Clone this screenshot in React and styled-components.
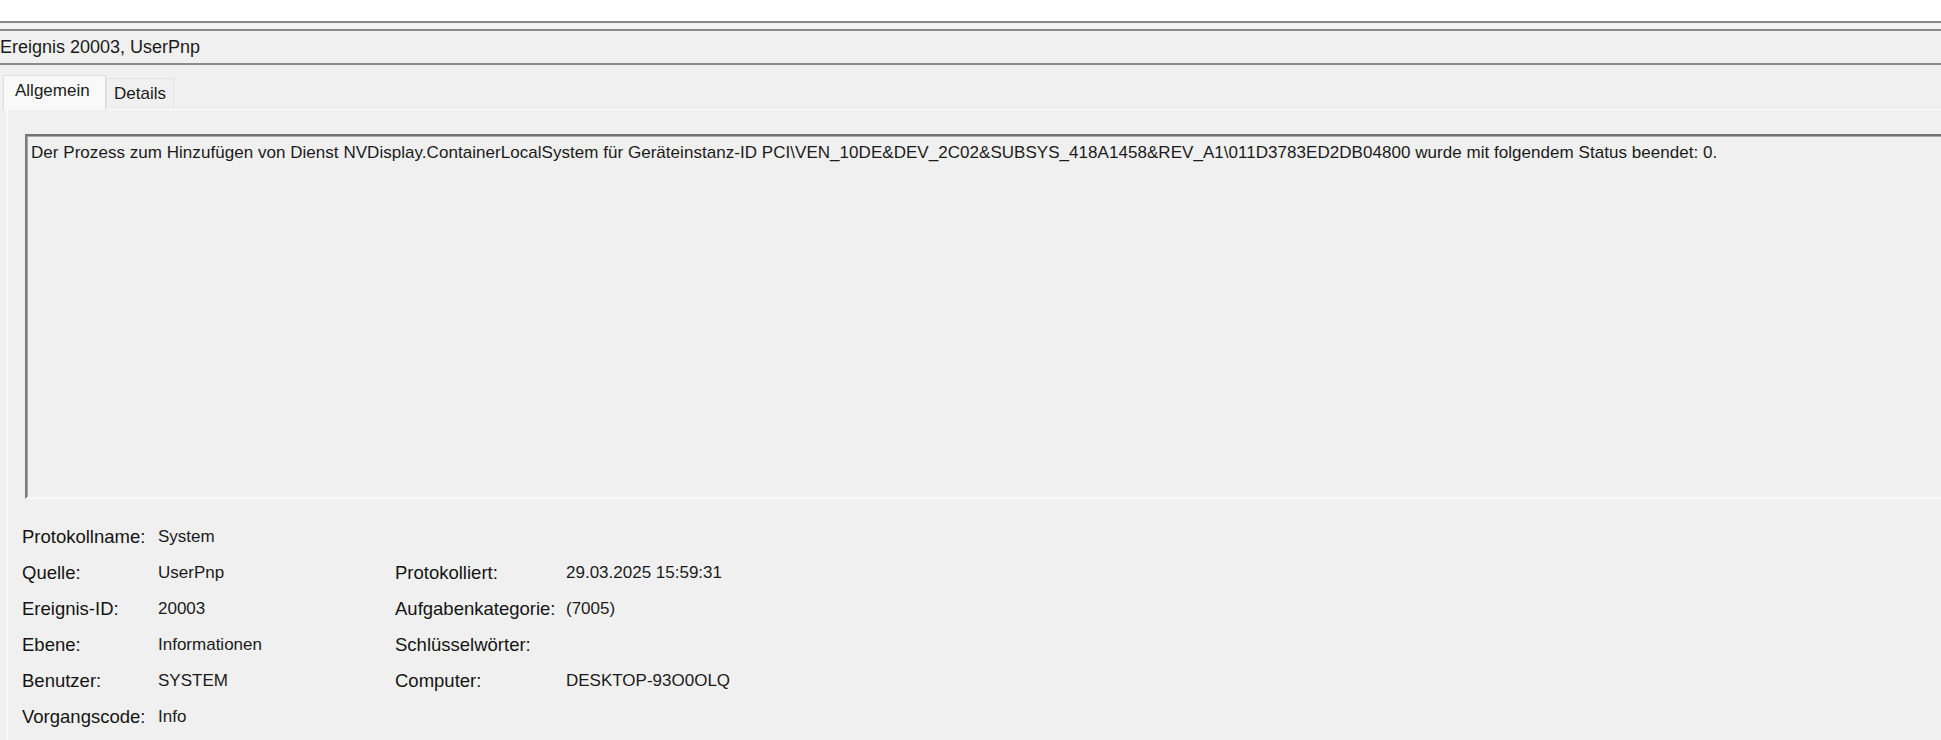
import React, { useState } from 'react';
import styled, { createGlobalStyle } from 'styled-components';

const GlobalStyle = createGlobalStyle`
  html, body {
    margin: 0;
    padding: 0;
    background: #ffffff;
    overflow: hidden;
  }
  body {
    font-family: "Liberation Sans", Arial, sans-serif;
    color: #1b1b1b;
  }
`;

const Page = styled.div`
  width: 1990px;
  height: 740px;
  display: flex;
  flex-direction: column;
`;

const TopSpace = styled.div`
  height: 21px;
  background: #ffffff;
`;

const Window = styled.div`
  flex: 1;
  display: flex;
  flex-direction: column;
  background: #f0f0f0;
  border-top: 2px solid #8c8c8c;
`;

const Band = styled.div`
  height: 6px;
  background: #f5f5f5;
  border-bottom: 2px solid #8c8c8c;
`;

const Header = styled.div`
  height: 32px;
  display: flex;
  align-items: center;
  font-size: 18px;
  border-bottom: 2px solid #8c8c8c;
`;

const TabStrip = styled.div`
  height: 44px;
  display: flex;
  align-items: flex-end;
  padding-left: 3px;
`;

const Tab = styled.button`
  font-family: inherit;
  font-size: 17px;
  color: #1b1b1b;
  border: 1px solid ${(p) => (p.$active ? '#dcdcdc' : '#e2e2e2')};
  border-bottom: none;
  background: ${(p) => (p.$active ? '#f9f9f9' : '#f0f0f0')};
  height: ${(p) => (p.$active ? '35px' : '30px')};
  margin-bottom: ${(p) => (p.$active ? '-1px' : '1px')};
  padding: ${(p) => (p.$active ? '0 12px 4px 11px' : '0 10px 0 7px')};
  width: ${(p) => p.$width}px;
  text-align: left;
  cursor: default;
  position: relative;
  z-index: ${(p) => (p.$active ? 1 : 0)};
`;

const Panel = styled.div`
  flex: 1;
  margin-left: 7px;
  border-top: 1px solid #fbfbfb;
  border-left: 1px solid #fbfbfb;
  padding: 24px 0 0 17px;
  display: flex;
  flex-direction: column;
`;

const MessageBox = styled.div`
  height: 354px;
  border-top: 2px solid #737373;
  border-left: 2px solid #7a7a7a;
  border-bottom: 2px solid #fafafa;
  box-shadow: inset 1px 1px 0 #a9a9a9;
  padding: 7px 0 0 4px;
  font-size: 17px;
  line-height: 20px;
  letter-spacing: 0.04px;
  white-space: nowrap;
`;

const Details = styled.div`
  display: grid;
  grid-template-columns: 136px 237px 171px auto;
  grid-auto-rows: 36px;
  align-items: center;
  padding: 20px 0 0 0;
  margin-left: -3px;
  font-size: 17px;
`;

const Label = styled.span`
  font-size: 18.5px;
  color: #141414;
`;

const Value = styled.span``;

const rows = [
  [['Protokollname:', 'System']],
  [['Quelle:', 'UserPnp'], ['Protokolliert:', '29.03.2025 15:59:31']],
  [['Ereignis-ID:', '20003'], ['Aufgabenkategorie:', '(7005)']],
  [['Ebene:', 'Informationen'], ['Schlüsselwörter:', '']],
  [['Benutzer:', 'SYSTEM'], ['Computer:', 'DESKTOP-93O0OLQ']],
  [['Vorgangscode:', 'Info']],
];

export default function App() {
  const [tab, setTab] = useState('allgemein');
  return (
    <>
      <GlobalStyle />
      <Page>
        <TopSpace />
        <Window>
          <Band />
          <Header>Ereignis 20003, UserPnp</Header>
          <TabStrip>
            <Tab $active={tab === 'allgemein'} $width={103} onClick={() => setTab('allgemein')}>
              Allgemein
            </Tab>
            <Tab $active={tab === 'details'} $width={68} onClick={() => setTab('details')}>
              Details
            </Tab>
          </TabStrip>
          <Panel>
            <MessageBox>
              Der Prozess zum Hinzufügen von Dienst NVDisplay.ContainerLocalSystem für Geräteinstanz-ID
              PCI\VEN_10DE&amp;DEV_2C02&amp;SUBSYS_418A1458&amp;REV_A1\011D3783ED2DB04800 wurde mit folgendem
              Status beendet: 0.
            </MessageBox>
            <Details>
              {rows.map((row, i) => (
                <React.Fragment key={i}>
                  {[0, 1].map((c) =>
                    row[c] ? (
                      <React.Fragment key={c}>
                        <Label>{row[c][0]}</Label>
                        <Value>{row[c][1]}</Value>
                      </React.Fragment>
                    ) : (
                      <React.Fragment key={c}>
                        <span />
                        <span />
                      </React.Fragment>
                    )
                  )}
                </React.Fragment>
              ))}
            </Details>
          </Panel>
        </Window>
      </Page>
    </>
  );
}
